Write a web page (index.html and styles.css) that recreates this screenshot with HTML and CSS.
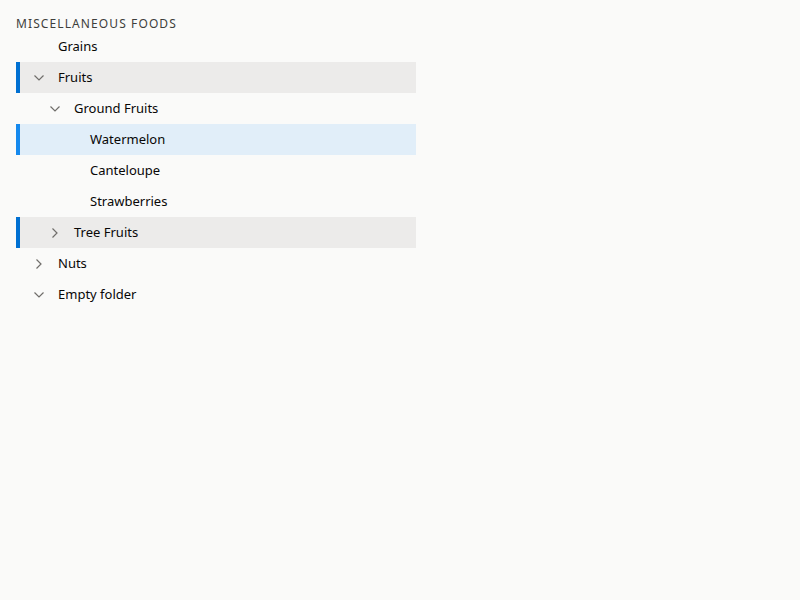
FILE: index.html
```html
<!DOCTYPE html>
<html>
<head>
<meta charset="utf-8">
<link rel="stylesheet" href="styles.css">
</head>
<body>
<div class="tree">
  <h4 class="tree-header">Miscellaneous Foods</h4>
  <ul class="tree-list">
    <li class="row lvl1"><span class="chev"></span><span class="label">Grains</span></li>
    <li class="row lvl1 active"><span class="chev"><svg viewBox="0 0 10 6" width="10" height="6"><path d="M0.5 0.5 L5 5 L9.5 0.5" /></svg></span><span class="label">Fruits</span></li>
    <li class="row lvl2"><span class="chev"><svg viewBox="0 0 10 6" width="10" height="6"><path d="M0.5 0.5 L5 5 L9.5 0.5" /></svg></span><span class="label">Ground Fruits</span></li>
    <li class="row lvl3 selected"><span class="chev"></span><span class="label">Watermelon</span></li>
    <li class="row lvl3"><span class="chev"></span><span class="label">Canteloupe</span></li>
    <li class="row lvl3"><span class="chev"></span><span class="label">Strawberries</span></li>
    <li class="row lvl2 active"><span class="chev"><svg viewBox="0 0 6 10" width="6" height="10"><path d="M0.5 0.5 L5 5 L0.5 9.5" /></svg></span><span class="label">Tree Fruits</span></li>
    <li class="row lvl1"><span class="chev"><svg viewBox="0 0 6 10" width="6" height="10"><path d="M0.5 0.5 L5 5 L0.5 9.5" /></svg></span><span class="label">Nuts</span></li>
    <li class="row lvl1"><span class="chev"><svg viewBox="0 0 10 6" width="10" height="6"><path d="M0.5 0.5 L5 5 L9.5 0.5" /></svg></span><span class="label">Empty folder</span></li>
  </ul>
</div>
</body>
</html>
```
FILE: styles.css
```css
html, body {
  margin: 0;
  padding: 0;
  background: #fafaf9;
}
body {
  font-family: "Noto Sans", "Open Sans", sans-serif;
  color: #080707;
  font-size: 13px;
}
.tree {
  width: 400px;
  padding: 12px 16px 0 16px;
}
.tree-header {
  margin: 0;
  height: 19px;
  line-height: 24px;
  font-size: 12px;
  font-weight: 400;
  text-transform: uppercase;
  letter-spacing: 1.1px;
  color: #3e3e3c;
}
.tree-list {
  list-style: none;
  margin: 0;
  padding: 0;
}
.row {
  display: flex;
  align-items: center;
  height: 31px;
  border-left: 4px solid transparent;
  box-sizing: border-box;
}
.lvl1 { padding-left: 11px; }
.lvl2 { padding-left: 27px; }
.lvl3 { padding-left: 43px; }
.chev {
  width: 16px;
  height: 16px;
  margin-right: 11px;
  display: flex;
  align-items: center;
  justify-content: center;
}
.chev svg path {
  fill: none;
  stroke: #706e6b;
  stroke-width: 1.2;
}
.active {
  background: #ecebea;
  border-left-color: #0070d2;
}
.selected {
  background: #e1eef9;
  border-left-color: #1589ee;
}
.label {
  line-height: 20px;
  padding-bottom: 2px;
}
```
